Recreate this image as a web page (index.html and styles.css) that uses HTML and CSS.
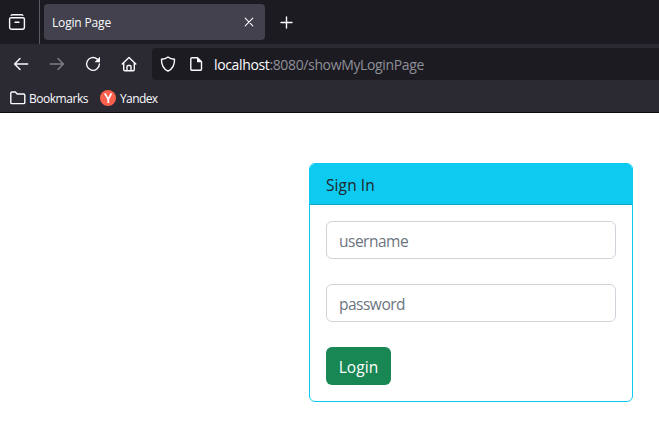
FILE: index.html
```html
<!DOCTYPE html>
<html lang="en">
<head>
<meta charset="utf-8">
<title>Login Page</title>
<link rel="stylesheet" href="styles.css">
</head>
<body>
<header class="browser">
  <div class="tabbar">
    <div class="view"><svg width="18" height="18" viewBox="0 0 18 18"><path d="M4 1.7h10M3 4.7h12a1.400 1.400 0 0 1 1.400 1.400v8.200a2 2 0 0 1-2 2H3.600a2 2 0 0 1-2-2V6.100A1.400 1.400 0 0 1 3 4.700zM7 9.200h4M3.200 2.300L4 1.700M14.800 2.300L14 1.700"/></svg></div>
    <div class="tab"><span class="tab-title">Login Page</span><svg width="10" height="10" viewBox="0 0 10 10"><path class="thin" d="M1.2 1.2l7.6 7.6M8.8 1.2L1.2 8.8"/></svg></div>
    <svg class="plus" width="13" height="13" viewBox="0 0 13 13"><path d="M6.500 1v11M1 6.500h11"/></svg>
  </div>
  <div class="toolbar">
    <nav class="nav">
      <svg width="16" height="16" viewBox="0 0 16 16"><path d="M1.7 8h13M7 2.6L1.6 8 7 13.4"/></svg>
      <svg class="dim" width="16" height="16" viewBox="0 0 16 16"><path d="M1.3 8h13M9 2.6L14.4 8 9 13.4"/></svg>
      <svg width="16" height="16" viewBox="0 0 16 16"><path d="M12.2 3.1A6.4 6.4 0 1 0 14.4 8"/><path class="fill" d="M15 .8v5.5H9.5z"/></svg>
      <svg width="16" height="16" viewBox="0 0 16 16"><path d="M1.2 8L8 1.5 14.8 8M2.7 7v6.6a1.2 1.2 0 0 0 1.2 1.2h8.2a1.2 1.2 0 0 0 1.2-1.2V7M6 14.8v-4.3A1 1 0 0 1 7 9.5h2a1 1 0 0 1 1 1v4.3"/></svg>
    </nav>
    <div class="urlbar">
      <svg width="16" height="16" viewBox="0 0 16 16"><path d="M8 1C6.500 2.200 4 3.100 1.500 3.300 1.300 8.500 2.900 12.700 8 15.200c5.100-2.500 6.700-6.700 6.500-11.900C12 3.100 9.500 2.200 8 1z"/></svg>
      <svg class="doc" width="14" height="16" viewBox="0 0 14 16"><path d="M3 1.700h5.500l4 4v7.400a1.200 1.200 0 0 1-1.200 1.200H3a1.200 1.200 0 0 1-1.200-1.200V2.900A1.200 1.200 0 0 1 3 1.700z"/><path class="fill" d="M8 1.300L13 6.300H8z"/></svg>
      <span class="url"><b>localhost</b>:8080/showMyLoginPage</span>
    </div>
  </div>
  <div class="bookmarks">
    <svg class="folder" width="16" height="14" viewBox="0 0 16 14"><path d="M2 1h3.300l1.900 2H13.600a1.200 1.200 0 0 1 1.200 1.200v7.200a1.200 1.200 0 0 1-1.200 1.200H2A1.200 1.200 0 0 1 .8 11.400V2.200A1.200 1.200 0 0 1 2 1z"/></svg>
    <span class="folder-name">Bookmarks</span>
    <svg class="yandex" width="16" height="16" viewBox="0 0 16 16"><circle cx="8" cy="8" r="8"/><path d="M4.800 3.400L8.300 9.400V13M11.400 3.400L8.300 9.400"/></svg>
    <span class="site-name">Yandex</span>
  </div>
</header>
<main class="page">
  <section class="card">
    <div class="card-header"><span>Sign In</span></div>
    <form class="card-body">
      <input class="field user" type="text" placeholder="username" aria-label="username">
      <input class="field pass" type="password" placeholder="password" aria-label="password">
      <button class="login" type="button">Login</button>
    </form>
  </section>
</main>
</body>
</html>
```
FILE: styles.css
```css
* { box-sizing: border-box; }
body { margin: 0; background: #fff; font-family: "Open Sans", "Noto Sans", sans-serif; overflow: hidden; }
svg { display: block; flex: none; fill: none; stroke: #fbfbfe; stroke-width: 1.4; stroke-linecap: round; stroke-linejoin: round; }
svg .fill { fill: #fbfbfe; stroke: none; }
svg .thin { stroke-width: 1.1; }
.browser { height: 113px; background: #2b2a33; border-bottom: 1px solid #0c0c0d; color: #fbfbfe; font-size: 12px; white-space: nowrap; }
.tabbar { display: flex; align-items: center; height: 44px; background: #1c1b22; }
.view { display: flex; align-items: center; width: 40px; height: 44px; padding-left: 8px; border-right: 1px solid #5b5a62; }
.tab { display: flex; align-items: center; justify-content: space-between; width: 221px; height: 36px; margin-left: 4px; padding: 0 11px 0 8px; border-radius: 4px; background: #42414d; }
.tab-title { letter-spacing: -.17px; }
.plus { margin: 1px 0 0 15px; }
.toolbar { display: flex; align-items: center; height: 40px; }
.nav { display: flex; gap: 20px; width: 152px; padding-left: 13px; }
.dim { opacity: .4; }
.urlbar { display: flex; align-items: center; flex: 1; height: 32px; padding-left: 8px; border-radius: 4px 0 0 4px; background: #1c1b22; }
.doc { margin-left: 13px; }
.url { margin-left: 11px; padding-top: 1px; font-size: 14px; letter-spacing: -.36px; color: #8f8f96; }
.url b { font-weight: 400; color: #fbfbfe; }
.bookmarks { display: flex; align-items: center; height: 28px; padding-left: 10px; }
.folder-name { margin-left: 3px; width: 71px; letter-spacing: -.47px; }
.yandex circle { fill: #fc604c; stroke: none; }
.yandex path { stroke-width: 1.8; stroke-linecap: butt; }
.site-name { margin-left: 4px; letter-spacing: -.6px; }
.page { padding: 50px 26px 0 309px; }
.card { height: 239px; border: 1px solid #0dcaf0; border-radius: 6px; color: #212529; font-size: 15.5px; overflow: hidden; }
.card-header { display: flex; align-items: center; height: 41px; padding: 1px 16px 0; background: #0dcaf0; border-bottom: 1px solid #0ba6c7; letter-spacing: .1px; }
.card-body { display: flex; flex-direction: column; align-items: flex-start; gap: 25px; padding: 16px; }
.field { width: 100%; height: 38px; padding: 1px 12px 0; border: 1px solid #ced4da; border-radius: 6px; background: #fff; font: inherit; letter-spacing: -.5px; }
.field::placeholder { color: #6c757d; opacity: 1; }
.login { width: 65px; height: 38px; padding: 1px 0 0; border: 0; border-radius: 6px; background: #198754; color: #fff; font: inherit; letter-spacing: .1px; }
```
